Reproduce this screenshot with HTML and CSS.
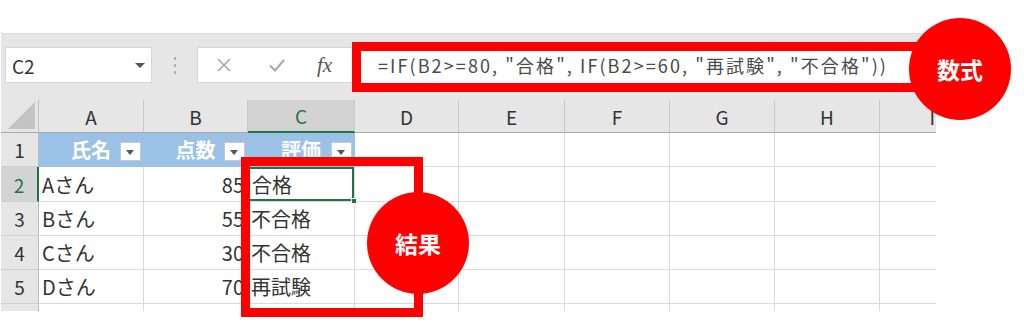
FILE: index.html
```html
<!DOCTYPE html>
<html lang="ja">
<head>
<meta charset="utf-8">
<title>IF関数</title>
<link rel="stylesheet" href="styles.css">
</head>
<body>
<div class="page">
  <div class="app">
    <div class="toolbar">
      <div class="namebox">
        <span class="nb-text">C2</span>
        <span class="nb-arrow"></span>
      </div>
      <div class="sep"><i></i><i></i><i></i></div>
      <div class="fxbox">
        <svg class="ico ico-x" width="20" height="20" viewBox="0 0 20 20"><path d="M4 4 L16 16 M16 4 L4 16" stroke="#a8a8a8" stroke-width="1.6" fill="none"/></svg>
        <svg class="ico ico-ok" width="20" height="20" viewBox="0 0 20 20"><path d="M3 10.5 L8 15.5 L17 5" stroke="#a8a8a8" stroke-width="2" fill="none"/></svg>
        <span class="fx">fx</span>
      </div>
      <div class="formula">=IF(B2&gt;=80, "合格", IF(B2&gt;=60, "再試験", "不合格"))</div>
    </div>
    <div class="sheet">
      <div class="corner"><span class="tri"></span></div>
      <div class="ch">A</div>
      <div class="ch">B</div>
      <div class="ch ch-act">C</div>
      <div class="ch">D</div>
      <div class="ch">E</div>
      <div class="ch">F</div>
      <div class="ch">G</div>
      <div class="ch">H</div>
      <div class="ch ch-last">I</div>

      <div class="rh">1</div>
      <div class="c hd">氏名<span class="fbtn"></span></div>
      <div class="c hd">点数<span class="fbtn"></span></div>
      <div class="c hd">評価<span class="fbtn"></span></div>
      <div class="c"></div><div class="c"></div><div class="c"></div><div class="c"></div><div class="c"></div><div class="c c-last"></div>

      <div class="rh rh-act">2</div>
      <div class="c">Aさん</div>
      <div class="c num">85</div>
      <div class="c sel">合格<span class="handle"></span></div>
      <div class="c"></div><div class="c"></div><div class="c"></div><div class="c"></div><div class="c"></div><div class="c c-last"></div>

      <div class="rh">3</div>
      <div class="c">Bさん</div>
      <div class="c num">55</div>
      <div class="c">不合格</div>
      <div class="c"></div><div class="c"></div><div class="c"></div><div class="c"></div><div class="c"></div><div class="c c-last"></div>

      <div class="rh">4</div>
      <div class="c">Cさん</div>
      <div class="c num">30</div>
      <div class="c">不合格</div>
      <div class="c"></div><div class="c"></div><div class="c"></div><div class="c"></div><div class="c"></div><div class="c c-last"></div>

      <div class="rh">5</div>
      <div class="c">Dさん</div>
      <div class="c num">70</div>
      <div class="c">再試験</div>
      <div class="c"></div><div class="c"></div><div class="c"></div><div class="c"></div><div class="c"></div><div class="c c-last"></div>

      <div class="rh rh-cut"></div>
      <div class="c cut"></div><div class="c cut"></div><div class="c cut"></div><div class="c cut"></div><div class="c cut"></div><div class="c cut"></div><div class="c cut"></div><div class="c cut"></div><div class="c cut c-last"></div>
    </div>
  </div>

  <div class="frame frame-formula"></div>
  <div class="badge badge-formula">数式</div>
  <div class="frame frame-result"></div>
  <div class="badge badge-result">結果</div>
</div>
</body>
</html>
```
FILE: styles.css
```css
* { box-sizing: border-box; }
html, body { margin: 0; padding: 0; background: #fff; }
body { font-family: "Noto Sans CJK JP", "Noto Sans", sans-serif; color: #333; }

.page { position: relative; width: 1024px; height: 330px; overflow: hidden; }

.app { margin: 33px 0 0 1px; width: 935px; }

/* toolbar */
.toolbar {
  height: 67px;
  background: #e6e6e6;
  border-top: 1px solid #dcdcdc;
  display: flex;
  align-items: flex-start;
  padding-top: 13px;
}
.namebox {
  margin-left: 4px;
  width: 147px;
  height: 36px;
  background: #fff;
  border: 1px solid #d6d6d6;
  display: flex;
  align-items: center;
  padding-left: 6px;
}
.nb-text { font-size: 19px; color: #333; line-height: 1; }
.nb-arrow {
  margin-left: auto;
  margin-right: 6px;
  width: 0; height: 0;
  border-left: 5px solid transparent;
  border-right: 5px solid transparent;
  border-top: 5px solid #555;
}
.sep {
  width: 45px;
  height: 36px;
  display: flex;
  flex-direction: column;
  align-items: center;
  justify-content: center;
  gap: 4px;
}
.sep i { display: block; width: 2px; height: 3px; background: #b0b0b0; }

.fxbox {
  width: 159px;
  height: 36px;
  background: #fff;
  border: 1px solid #d6d6d6;
  border-right: 0;
  display: flex;
  align-items: center;
  padding-left: 16px;
}
.ico { display: block; }
.ico-ok { margin-left: 33px; }
.fx {
  margin-left: 30px;
  font-family: "Liberation Serif", "DejaVu Serif", serif;
  font-style: italic;
  font-size: 21px;
  color: #555;
  line-height: 1;
}
.formula {
  width: 579px;
  height: 36px;
  background: #fff;
  padding-left: 22px;
  display: flex;
  align-items: center;
  font-size: 18px;
  letter-spacing: 2.1px;
  color: #4a4a4a;
  white-space: nowrap;
}

/* sheet */
.sheet {
  display: grid;
  grid-template-columns: 38px 105px 104px 107px 104px 106px 105px 105px 105px 56px;
  grid-template-rows: 33px 34px 35px 34px 34px 34px 7px;
}
.corner {
  background: #e6e6e6;
  border-right: 1px solid #bdbdbd;
  border-bottom: 1px solid #aaa;
  position: relative;
}
.tri {
  position: absolute;
  right: 3px; bottom: 3px;
  width: 0; height: 0;
  border-left: 27px solid transparent;
  border-bottom: 27px solid #c3c3c3;
}
.ch {
  background: #e6e6e6;
  border-right: 1px solid #c8c8c8;
  border-bottom: 1px solid #aaa;
  display: flex;
  align-items: center;
  justify-content: center;
  font-size: 19px;
  color: #333;
}
.ch-act {
  background: #d3d3d3;
  color: #217346;
  border-bottom: 2px solid #217346;
}
.ch-last { border-right: 0; justify-content: flex-end; padding-right: 1px; }

.rh {
  background: #e6e6e6;
  border-right: 1px solid #bdbdbd;
  border-bottom: 1px solid #cfcfcf;
  display: flex;
  align-items: center;
  justify-content: center;
  font-size: 19px;
  color: #333;
}
.rh-act {
  background: #d3d3d3;
  color: #217346;
  border-right: 2px solid #217346;
}
.rh-cut { border-bottom: 0; }

.c {
  border-right: 1px solid #dadada;
  border-bottom: 1px solid #dadada;
  display: flex;
  align-items: center;
  padding-left: 3px;
  font-size: 20px;
  color: #333;
  white-space: nowrap;
  position: relative;
}
.c-last { border-right: 0; }
.cut { border-bottom: 0; }
.num { justify-content: flex-end; padding-right: 3px; }

.hd {
  background: #9bc2e6;
  border-right-color: #9bc2e6;
  border-bottom-color: #9bc2e6;
  color: #fff;
  font-weight: bold;
  font-size: 20px;
  justify-content: center;
  padding-left: 0;
}
.fbtn {
  position: absolute;
  right: 2px;
  top: 9px;
  width: 21px;
  height: 19px;
  background: #fff;
  border: 1px solid #c9c9c9;
}
.fbtn::after {
  content: "";
  position: absolute;
  left: 5px; top: 7px;
  width: 0; height: 0;
  border-left: 4.5px solid transparent;
  border-right: 4.5px solid transparent;
  border-top: 5px solid #555;
}

.sel {
  box-shadow: inset 0 0 0 2px #217346;
  padding-left: 4px;
}
.handle {
  position: absolute;
  right: -3px; bottom: -3px;
  width: 6px; height: 6px;
  background: #217346;
  border: 1px solid #fff;
  z-index: 2;
}

/* annotations */
.frame {
  position: absolute;
  border: 9px solid #ff0000;
  z-index: 5;
}
.frame-formula { left: 352px; top: 42px; width: 590px; height: 50px; }
.frame-result { left: 241px; top: 157px; width: 182px; height: 160px; }

.badge {
  position: absolute;
  width: 102px;
  height: 102px;
  border-radius: 50%;
  background: #ff0000;
  color: #fff;
  font-weight: bold;
  font-size: 23px;
  display: flex;
  align-items: center;
  justify-content: center;
  z-index: 6;
}
.badge-formula { left: 909px; top: 18px; }
.badge-result { left: 367px; top: 192px; }
```
